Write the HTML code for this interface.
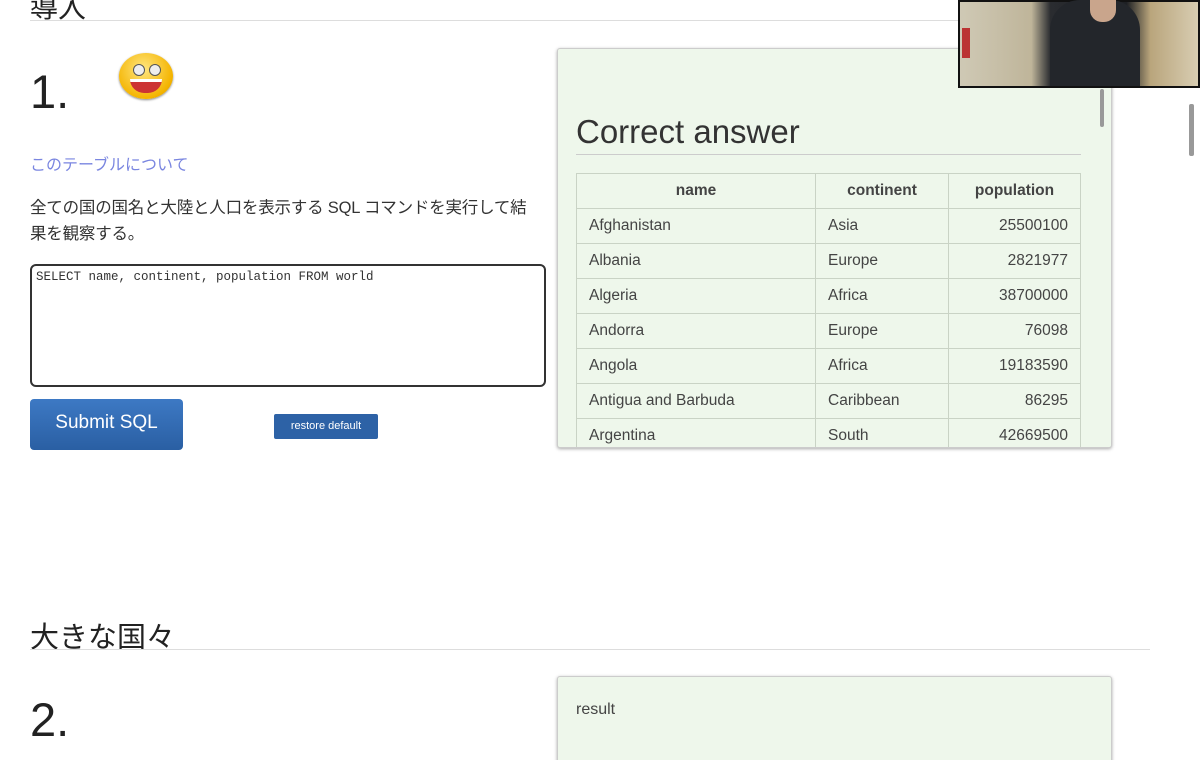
<!DOCTYPE html>
<html style="overflow:hidden"><head><meta charset="utf-8"><style>
html,body{margin:0;width:1200px;height:760px;overflow:hidden}
body{background:#fff;font-family:"Liberation Sans","Noto Sans CJK JP",sans-serif;color:#222;position:relative}
.a{position:absolute}
.h{font-size:28px;color:#222}
table{border-collapse:collapse;font-size:15.5px;color:#444}
td,th{border:1px solid #c9d3c5;height:35px;padding:0 12px;box-sizing:border-box}
th{font-weight:bold;color:#444;text-align:center}
td.n{text-align:right}
</style></head><body>
<div class="a h" style="left:30px;top:-14px">導入</div>
<div class="a" style="left:30px;top:20px;width:1120px;height:1px;background:#ddd"></div>
<div class="a" style="left:30px;top:64px;font-size:47px">1.</div>
<div class="a" style="left:119px;top:53px;width:54px;height:46px;border-radius:50%;background:radial-gradient(circle at 45% 35%,#ffe680,#f4b400 70%,#c98a00);box-shadow:0 1px 2px #888"></div>
<div class="a" style="left:133px;top:64px;width:10px;height:10px;border-radius:50%;background:#eee;border:1px solid #555"></div>
<div class="a" style="left:149px;top:64px;width:10px;height:10px;border-radius:50%;background:#eee;border:1px solid #555"></div>
<div class="a" style="left:130px;top:79px;width:32px;height:11px;border-radius:0 0 16px 16px;background:#c33;border-top:3px solid #fff"></div>
<div class="a" style="left:30px;top:151px;font-size:16px;color:#7a86e0">このテーブルについて</div>
<div class="a" style="left:30px;top:195px;width:512px;font-size:16.5px;line-height:26px;color:#333;letter-spacing:-0.2px">全ての国の国名と大陸と人口を表示する SQL コマンドを実行して結果を観察する。</div>
<div class="a" style="left:30px;top:264px;width:516px;height:123px;border:2px solid #333;border-radius:6px;font-family:'Liberation Mono',monospace;font-size:12.5px;padding:4px;box-sizing:border-box;color:#333">SELECT name, continent, population FROM world</div>
<div class="a" style="left:30px;top:399px;width:153px;height:51px;border-radius:4px;background:linear-gradient(#3d79c4,#2a5fa3);color:#fff;font-size:19px;line-height:48px;text-align:center">Submit SQL</div>
<div class="a" style="left:274px;top:414px;width:104px;height:25px;background:#2d62a6;color:#fff;font-size:11px;line-height:25px;text-align:center;border-radius:2px">restore default</div>
<div class="a" style="left:557px;top:48px;width:553px;height:398px;background:#eef7eb;border:1px solid #ccc;border-radius:3px;box-shadow:0 1px 3px #aaa;overflow:hidden">
<div class="a" style="left:18px;top:64px;font-size:33px;color:#333">Correct answer</div>
<div class="a" style="left:18px;top:105px;width:505px;height:1px;background:#ccc"></div>
<table class="a" style="left:18px;top:124px;width:505px">
<tr><th style="width:239px">name</th><th style="width:133px">continent</th><th>population</th></tr>
<tr><td>Afghanistan</td><td>Asia</td><td class="n">25500100</td></tr>
<tr><td>Albania</td><td>Europe</td><td class="n">2821977</td></tr>
<tr><td>Algeria</td><td>Africa</td><td class="n">38700000</td></tr>
<tr><td>Andorra</td><td>Europe</td><td class="n">76098</td></tr>
<tr><td>Angola</td><td>Africa</td><td class="n">19183590</td></tr>
<tr><td>Antigua and Barbuda</td><td>Caribbean</td><td class="n">86295</td></tr>
<tr><td>Argentina</td><td>South</td><td class="n">42669500</td></tr>
</table>
<div class="a" style="left:542px;top:40px;width:4px;height:38px;background:#999;border-radius:2px"></div>
</div>
<div class="a" style="left:1189px;top:104px;width:5px;height:52px;background:#999;border-radius:2px"></div>
<div class="a" style="left:958px;top:0;width:242px;height:88px;background:linear-gradient(90deg,#cfc9b5 0,#bfb59a 30%,#2a2c30 38%,#1e2024 70%,#b9a57c 80%,#d8cdb2 100%);border:2px solid #111;box-sizing:border-box"></div>
<div class="a" style="left:1050px;top:0;width:90px;height:86px;background:#23262b;border-radius:30px 30px 0 0"></div>
<div class="a" style="left:1090px;top:0;width:26px;height:22px;background:#c9a58c;border-radius:0 0 12px 12px"></div>
<div class="a" style="left:962px;top:28px;width:8px;height:30px;background:#b33"></div>
<div class="a h" style="left:30px;top:614px;font-size:29px">大きな国々</div>
<div class="a" style="left:30px;top:649px;width:1120px;height:1px;background:#ddd"></div>
<div class="a" style="left:30px;top:692px;font-size:47px">2.</div>
<div class="a" style="left:557px;top:676px;width:553px;height:100px;background:#eef7eb;border:1px solid #ccc;border-radius:3px;box-shadow:0 1px 3px #aaa">
<div class="a" style="left:18px;top:24px;font-size:16px;color:#444">result</div></div>
</body></html>
